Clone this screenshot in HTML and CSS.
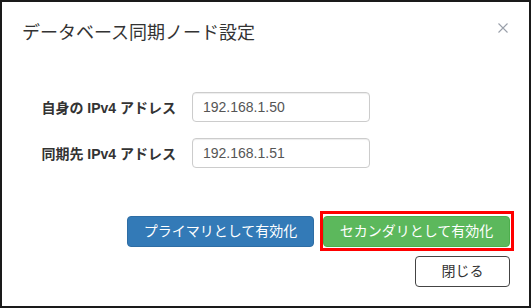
FILE: index.html
```html
<!DOCTYPE html>
<html lang="ja">
<head>
    <meta charset="UTF-8">
    <meta name="viewport" content="width=device-width, initial-scale=1.0">
    <title>データベース同期ノード設定</title>
    <link rel="stylesheet" href="styles.css">
</head>
<body>
    <div class="modal">
        <div class="modal-header">
            <h4 class="modal-title">データベース同期ノード設定</h4>
            <button type="button" class="close" aria-label="Close">
                <svg width="10" height="10" viewBox="0 0 10 10">
                    <path d="M0.5 0.5 L9.5 9.5 M9.5 0.5 L0.5 9.5" stroke="#9aa0aa" stroke-width="1.1" fill="none"/>
                </svg>
            </button>
        </div>
        <form class="modal-body">
            <div class="form-row">
                <label for="selfIp">自身の IPv4 アドレス</label>
                <input type="text" id="selfIp" value="192.168.1.50">
            </div>
            <div class="form-row">
                <label for="peerIp">同期先 IPv4 アドレス</label>
                <input type="text" id="peerIp" value="192.168.1.51">
            </div>
        </form>
        <div class="modal-footer">
            <div class="btn-row">
                <button type="button" class="btn btn-primary">プライマリとして有効化</button>
                <button type="button" class="btn btn-success marked">セカンダリとして有効化</button>
            </div>
            <button type="button" class="btn btn-default">閉じる</button>
        </div>
    </div>
</body>
</html>
```

FILE: styles.css
```css
html, body {
    margin: 0;
    padding: 0;
}
body {
    width: 531px;
    height: 308px;
    background: #fff;
    font-family: "Liberation Sans", "Noto Sans CJK JP", sans-serif;
    font-size: 14px;
    color: #333;
}
.modal {
    box-sizing: border-box;
    width: 531px;
    height: 308px;
    border: 2px solid #1a1a1a;
    display: flex;
    flex-direction: column;
}
.modal-header {
    display: flex;
    justify-content: space-between;
    align-items: flex-start;
    padding: 18px 21px 0 20px;
}
.modal-title {
    margin: 0;
    font-size: 18px;
    font-weight: normal;
    line-height: 26px;
}
.close {
    margin-top: 3px;
    padding: 0;
    border: none;
    background: none;
    line-height: 0;
    cursor: pointer;
}
.modal-body {
    display: flex;
    flex-direction: column;
    gap: 16px;
    padding: 46px 20px 0 20px;
}
.form-row {
    display: flex;
    align-items: center;
    gap: 16px;
}
.form-row label {
    width: 154px;
    text-align: right;
    font-weight: bold;
}
.form-row input {
    box-sizing: border-box;
    width: 178px;
    height: 30px;
    padding: 0 10px;
    border: 1px solid #ccc;
    border-radius: 4px;
    box-shadow: inset 0 1px 1px rgba(0, 0, 0, .075);
    font-family: "Liberation Sans", sans-serif;
    font-size: 14px;
    color: #555;
}
.modal-footer {
    display: flex;
    flex-direction: column;
    align-items: flex-end;
    gap: 9px;
    padding: 48px 19px 0 0;
}
.btn-row {
    display: flex;
    gap: 9px;
}
.btn {
    box-sizing: border-box;
    height: 31px;
    padding: 0 12px;
    border: 1px solid transparent;
    border-radius: 4px;
    font-family: "Liberation Sans", "Noto Sans CJK JP", sans-serif;
    font-size: 14px;
    line-height: 29px;
    cursor: pointer;
}
.btn-primary,
.btn-success {
    width: 187px;
    color: #fff;
}
.btn-primary {
    background-color: #337ab7;
    border-color: #2e6da4;
}
.btn-success {
    background-color: #5cb85c;
    border-color: #4cae4c;
}
.btn-default {
    width: 95px;
    background: #fff;
    border-color: #444;
    color: #333;
}
.marked {
    position: relative;
}
.marked::after {
    content: "";
    position: absolute;
    left: -4px;
    top: -6px;
    right: -5px;
    bottom: -5px;
    border: 3px solid #f00;
}
```
